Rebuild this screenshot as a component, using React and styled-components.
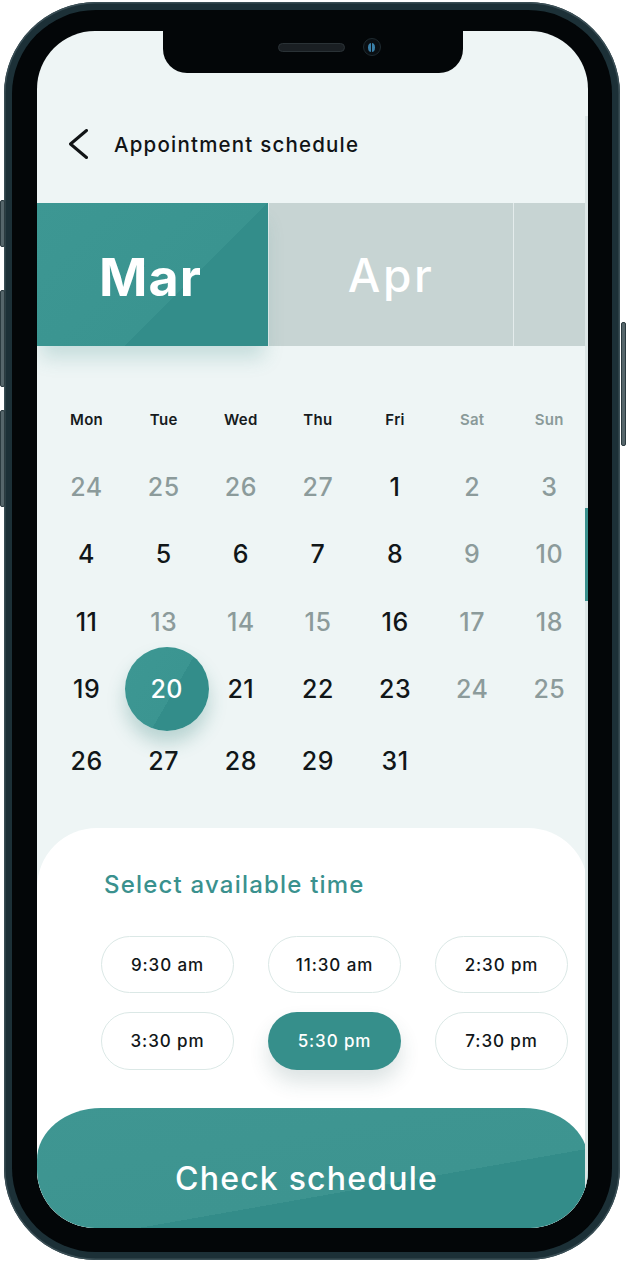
import React from "react";
import styled, { createGlobalStyle } from "styled-components";

const GlobalStyle = createGlobalStyle`
  html, body { margin: 0; padding: 0; background: #ffffff; }
  body { font-family: Inter, "Noto Sans", "Liberation Sans", sans-serif; -webkit-font-smoothing: antialiased; }
  * { box-sizing: border-box; }
`;

const Stage = styled.div`
  width: 626px;
  height: 1262px;
  padding: 2px 0 0 4px;
  overflow: hidden;
`;

const Phone = styled.div`
  position: relative;
  width: 616px;
  height: 1258px;
  border-radius: 92px;
  background: #1c3037;
  box-shadow: inset 0 0 0 1.5px #3a4e55;
  padding: 8px;
`;

const SideButton = styled.div`
  position: absolute;
  ${(p) => (p.$side === "left" ? "left: -4px;" : "right: -6px;")}
  top: ${(p) => p.$top}px;
  width: 5px;
  height: ${(p) => p.$h}px;
  border-radius: 2px;
  background: #56666b;
  border: 1px solid #2b3b40;
`;

const Bezel = styled.div`
  height: 100%;
  border-radius: 84px;
  background: #030608;
  padding: 21px 24px 24px 25px;
`;

const Screen = styled.div`
  position: relative;
  height: 100%;
  border-radius: 58px;
  overflow: hidden;
  background: #eef5f5;
  display: flex;
  flex-direction: column;
`;

const Notch = styled.div`
  position: absolute;
  top: 0;
  left: 50%;
  transform: translateX(-50%);
  width: 300px;
  height: 42px;
  background: #030608;
  border-radius: 0 0 24px 24px;
  z-index: 5;
`;

const Speaker = styled.div`
  position: absolute;
  left: 115px;
  top: 12px;
  width: 67px;
  height: 9px;
  border-radius: 5px;
  background: #1a1f23;
  border: 1px solid #2a3236;
`;

const Camera = styled.div`
  position: absolute;
  left: 200px;
  top: 7px;
  width: 18px;
  height: 18px;
  border-radius: 50%;
  background: #0a0f13;
  border: 1px solid #1e2a30;
  display: flex;
  align-items: center;
  justify-content: center;
  &::after {
    content: "";
    width: 7px;
    height: 9px;
    border-radius: 50%;
    background: linear-gradient(90deg, #3a7fa8 0 40%, #0a0f13 40% 60%, #3a7fa8 60%);
  }
`;

const ScrollTrack = styled.div`
  position: absolute;
  right: 0;
  top: 85px;
  bottom: 0;
  width: 3px;
  background: #dce6e6;
  z-index: 4;
`;

const ScrollThumb = styled.div`
  position: absolute;
  left: 0;
  top: 392px;
  width: 3px;
  height: 93px;
  background: #3a918e;
`;

const Header = styled.div`
  margin-top: 84px;
  height: 58px;
  display: flex;
  align-items: center;
  gap: 26px;
  padding-left: 31px;
  flex: none;
`;

const Title = styled.h1`
  margin: 0;
  font-size: 20.5px;
  font-weight: 500;
  color: #111416;
  letter-spacing: 1.2px;
`;

const MonthBand = styled.div`
  margin-top: 30px;
  height: 143px;
  display: flex;
  flex: none;
`;

const Month = styled.div`
  position: relative;
  flex: ${(p) => (p.$w ? `0 0 ${p.$w}px` : "1 1 auto")};
  min-width: 0;
  display: flex;
  align-items: center;
  justify-content: center;
  color: #ffffff;
  padding-top: ${(p) => (p.$active ? 6 : 0)}px;
  padding-right: ${(p) => (p.$active ? 4 : 0)}px;
  font-size: ${(p) => (p.$active ? 52 : 46)}px;
  font-weight: ${(p) => (p.$active ? 700 : 500)};
  letter-spacing: ${(p) => (p.$active ? 1 : 2.5)}px;
  background: ${(p) =>
    p.$active
      ? "linear-gradient(135deg, #3d9793 0%, #3a9490 61.5%, #338d8a 61.5%, #338d8a 100%)"
      : "#c7d4d3"};
  border-left: ${(p) => (p.$active ? "none" : "1px solid #e4ecec")};
  box-shadow: ${(p) => (p.$active ? "0 16px 18px -4px rgba(60, 140, 135, 0.22)" : "none")};
  z-index: ${(p) => (p.$active ? 2 : 1)};
`;

const Weekdays = styled.div`
  margin-top: 64px;
  height: 20px;
  padding-left: 11px;
  display: grid;
  grid-template-columns: repeat(7, 77.14px);
  flex: none;
`;

const Weekday = styled.div`
  text-align: center;
  font-size: 15px;
  line-height: 20px;
  font-weight: 600;
  letter-spacing: 0.3px;
  color: ${(p) => (p.$weekend ? "#8a9a99" : "#161b1d")};
`;

const DayGrid = styled.div`
  margin-top: 23px;
  padding-left: 11px;
  display: grid;
  grid-template-columns: repeat(7, 77.14px);
  grid-template-rows: repeat(4, 67.5px) 75px;
  flex: none;
`;

const Day = styled.div`
  display: flex;
  align-items: center;
  justify-content: center;
  font-size: 25px;
  font-weight: 500;
  letter-spacing: 0.5px;
  color: ${(p) => (p.$muted ? "#8c9b9b" : "#111618")};
`;

const Selected = styled.div`
  align-self: center;
  justify-self: center;
  width: 84px;
  height: 84px;
  margin: -8.25px 0;
  transform: translateX(3px);
  border-radius: 50%;
  display: flex;
  align-items: center;
  justify-content: center;
  font-size: 25px;
  font-weight: 500;
  letter-spacing: 0.5px;
  color: #ffffff;
  background: linear-gradient(120deg, #3d9793 0%, #3b9591 56%, #338d8a 56%, #338d8a 100%);
  box-shadow: 0 12px 18px rgba(45, 125, 120, 0.28);
  z-index: 2;
`;

const Panel = styled.div`
  margin-top: 30px;
  flex: 1;
  background: #ffffff;
  border-radius: 60px 60px 0 0;
  display: flex;
  flex-direction: column;
  padding-top: 43px;
`;

const PanelTitle = styled.h2`
  margin: 0;
  padding-left: 67px;
  height: 28px;
  line-height: 28px;
  font-size: 24px;
  font-weight: 500;
  letter-spacing: 1.2px;
  color: #3a918e;
`;

const Times = styled.div`
  margin-top: 37px;
  padding-left: 64px;
  display: grid;
  grid-template-columns: repeat(3, 133px);
  grid-template-rows: 57px 58px;
  column-gap: 34px;
  row-gap: 19px;
`;

const TimeChip = styled.button`
  border-radius: 30px;
  border: ${(p) => (p.$active ? "none" : "1.5px solid #dbe8e6")};
  background: ${(p) => (p.$active ? "#368f8b" : "#ffffff")};
  color: ${(p) => (p.$active ? "#ffffff" : "#111618")};
  font-family: inherit;
  font-size: 17px;
  font-weight: 500;
  letter-spacing: 0.9px;
  box-shadow: ${(p) => (p.$active ? "0 12px 20px rgba(40, 80, 80, 0.16)" : "none")};
  padding: 0;
`;

const CheckButton = styled.button`
  margin-top: 38px;
  height: 120px;
  flex: none;
  border: none;
  border-radius: 64px 64px 0 0 / 52px 52px 0 0;
  background: linear-gradient(170deg, #3f9692 0%, #3d9490 63.5%, #338c89 63.5%, #338c89 100%);
  color: #ffffff;
  font-family: inherit;
  font-size: 32px;
  font-weight: 500;
  padding: 20px 12px 0 0;
  letter-spacing: 1.2px;
`;

const BackIcon = () => (
  <svg width="20" height="30" viewBox="0 0 20 30" fill="none">
    <path d="M18.5 1.5 L2.5 15 L18.5 28.5" stroke="#111416" strokeWidth="3" strokeLinecap="round" strokeLinejoin="round" />
  </svg>
);

const weekdays = ["Mon", "Tue", "Wed", "Thu", "Fri", "Sat", "Sun"];

const days = [
  [24, 1], [25, 1], [26, 1], [27, 1], [1, 0], [2, 1], [3, 1],
  [4, 0], [5, 0], [6, 0], [7, 0], [8, 0], [9, 1], [10, 1],
  [11, 0], [13, 1], [14, 1], [15, 1], [16, 0], [17, 1], [18, 1],
  [19, 0], [20, 2], [21, 0], [22, 0], [23, 0], [24, 1], [25, 1],
  [26, 0], [27, 0], [28, 0], [29, 0], [31, 0],
];

const times = ["9:30 am", "11:30 am", "2:30 pm", "3:30 pm", "5:30 pm", "7:30 pm"];

export default function App() {
  return (
    <>
      <GlobalStyle />
      <Stage>
        <Phone>
          <SideButton $side="left" $top={198} $h={47} />
          <SideButton $side="left" $top={288} $h={97} />
          <SideButton $side="left" $top={408} $h={97} />
          <SideButton $side="right" $top={320} $h={124} />
          <Bezel>
            <Screen>
              <Notch>
                <Speaker />
                <Camera />
              </Notch>
              <ScrollTrack>
                <ScrollThumb />
              </ScrollTrack>
              <Header>
                <BackIcon />
                <Title>Appointment schedule</Title>
              </Header>
              <MonthBand>
                <Month $active $w={231}>Mar</Month>
                <Month $w={245}>Apr</Month>
                <Month />
              </MonthBand>
              <Weekdays>
                {weekdays.map((d, i) => (
                  <Weekday key={d} $weekend={i > 4}>{d}</Weekday>
                ))}
              </Weekdays>
              <DayGrid>
                {days.map(([n, s], i) =>
                  s === 2 ? (
                    <Selected key={i}>{n}</Selected>
                  ) : (
                    <Day key={i} $muted={s === 1}>{n}</Day>
                  )
                )}
              </DayGrid>
              <Panel>
                <PanelTitle>Select available time</PanelTitle>
                <Times>
                  {times.map((t) => (
                    <TimeChip key={t} $active={t === "5:30 pm"}>{t}</TimeChip>
                  ))}
                </Times>
                <CheckButton>Check schedule</CheckButton>
              </Panel>
            </Screen>
          </Bezel>
        </Phone>
      </Stage>
    </>
  );
}
